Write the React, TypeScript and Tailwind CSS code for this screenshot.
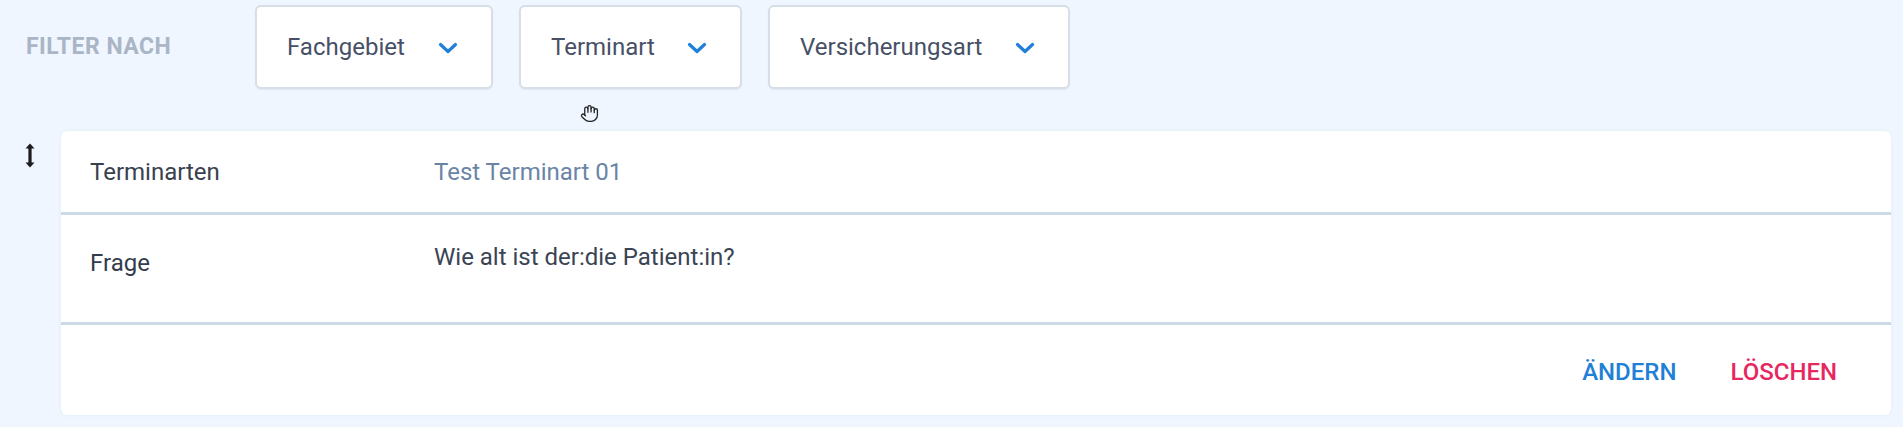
import { Hand } from 'lucide-react'

const filters = [
  { label: 'Fachgebiet', width: 'w-[238px]' },
  { label: 'Terminart', width: 'w-[223px]' },
  { label: 'Versicherungsart', width: 'w-[302px]' },
]

function Chevron() {
  return (
    <svg width="20" height="12" viewBox="0 0 20 12" fill="none" className="shrink-0">
      <path d="M2.5 2.5 L10 9.5 L17.5 2.5" stroke="#1e80d8" strokeWidth="3.2" strokeLinecap="round" strokeLinejoin="round" />
    </svg>
  )
}

function DragHandle() {
  return (
    <svg width="10" height="25" viewBox="0 0 10 25" fill="none">
      <path d="M5 4 V21" stroke="#1c1c1c" strokeWidth="3.2" />
      <path d="M0.5 5.5 L5 0.5 L9.5 5.5 Z" fill="#1c1c1c" />
      <path d="M0.5 19.5 L5 24.5 L9.5 19.5 Z" fill="#1c1c1c" />
    </svg>
  )
}

export default function App() {
  return (
    <div className="relative min-h-[427px] w-full bg-[#eff6ff] pt-[5px] pr-3 pb-3 font-['Roboto','Liberation_Sans',sans-serif]">
      {/* Filterleiste */}
      <div className="flex h-[84px] items-center">
        <div className="w-[255px] pl-[26px] text-[23px] font-bold tracking-[0.5px] text-[#aab5c5]">
          FILTER NACH
        </div>
        <div className="flex gap-[26px]">
          {filters.map((f) => (
            <button
              key={f.label}
              className={`flex h-[84px] ${f.width} items-center justify-between rounded-[6px] border-2 border-[#d8dee5] bg-white pr-[33px] pl-[30px] text-[24px] text-[#475066] shadow-[0_1px_2px_rgba(0,0,0,0.06)]`}
            >
              <span className="-mt-[1px]">{f.label}</span>
              <span className="mt-[1px]">
                <Chevron />
              </span>
            </button>
          ))}
        </div>
      </div>

      {/* Mauszeiger */}
      <Hand className="absolute top-[104px] left-[580px] h-[19px] w-[19px] text-[#222]" strokeWidth={1.6} />

      {/* Karte */}
      <div className="mt-[42px] flex">
        <div className="w-[61px] pt-[12px] pl-[25px]">
          <DragHandle />
        </div>
        <div className="flex-1 overflow-hidden rounded-[6px] bg-white shadow-[0_0_3px_rgba(120,150,190,0.12)]">
          <div className="flex h-[81px] items-center pl-[29px] text-[24px]">
            <div className="w-[344px] text-[#39414f]">Terminarten</div>
            <div className="text-[#6a84a6]">Test Terminart 01</div>
          </div>
          <div className="h-[3px] bg-[#cdd9e6]" />
          <div className="flex h-[107px] pl-[29px] text-[24px]">
            <div className="w-[344px] pt-[30px] text-[#333c4c]">Frage</div>
            <div className="pt-[24px] text-[#3a4454]">Wie alt ist der:die Patient:in?</div>
          </div>
          <div className="h-[3px] bg-[#cdd9e6]" />
          <div className="flex h-[90px] items-center justify-end gap-[54px] pt-[4px] pr-[54px] text-[24px] font-medium">
            <button className="text-[#1f80d6]">ÄNDERN</button>
            <button className="text-[#e7285f]">LÖSCHEN</button>
          </div>
        </div>
      </div>
    </div>
  )
}
